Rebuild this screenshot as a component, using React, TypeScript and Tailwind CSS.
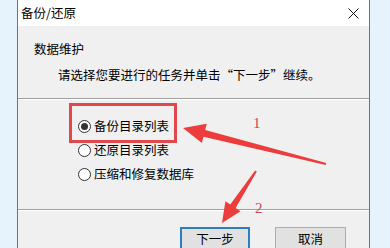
import React from 'react';

type Pt = [number, number];

// builds a tapered arrow polygon from tail to tip
const arrowPoints = (tail: Pt, tip: Pt, headLen: number, headHalf: number, shaftHalf: number, tailHalf: number) => {
  const dx = tip[0] - tail[0];
  const dy = tip[1] - tail[1];
  const len = Math.hypot(dx, dy);
  const ux = dx / len;
  const uy = dy / len;
  const nx = -uy;
  const ny = ux;
  const bx = tip[0] - ux * headLen;
  const by = tip[1] - uy * headLen;
  const pts: Pt[] = [
    tip,
    [bx + nx * headHalf, by + ny * headHalf],
    [bx + nx * shaftHalf, by + ny * shaftHalf],
    [tail[0] + nx * tailHalf, tail[1] + ny * tailHalf],
    [tail[0] - nx * tailHalf, tail[1] - ny * tailHalf],
    [bx - nx * shaftHalf, by - ny * shaftHalf],
    [bx - nx * headHalf, by - ny * headHalf],
  ];
  return pts.map(p => p.join(',')).join(' ');
};

const Radio: React.FC<{ checked?: boolean; label: string }> = ({ checked, label }) => (
  <div className="flex items-center h-[24px]">
    <span className="w-[13px] h-[13px] rounded-full border border-[#333333] bg-white flex items-center justify-center">
      {checked && <span className="w-[7px] h-[7px] rounded-full bg-[#333333]" />}
    </span>
    <span className="ml-[3px]">{label}</span>
  </div>
);

const App: React.FC = () => {
  return (
    <div
      className="relative w-[390px] h-[248px] overflow-hidden bg-[#e6f2fc] text-[12.5px] text-black"
      style={{ fontFamily: '"Noto Sans CJK SC", "Noto Sans", sans-serif' }}
    >
      <div className="ml-[17px] w-[353px] h-full border-x border-[#3d81b0] flex flex-col">
        {/* title bar */}
        <div className="h-[26px] bg-white flex items-center justify-between pl-[3px] pr-[10px] shrink-0">
          <span className="leading-[16px]">备份/还原</span>
          <svg width="11" height="11" viewBox="0 0 11 11" className="block">
            <path d="M0.5 0.5 L10.5 10.5 M10.5 0.5 L0.5 10.5" stroke="#111" strokeWidth="1" />
          </svg>
        </div>

        <div className="flex-1 bg-[#f0f0f0] flex flex-col">
          {/* header */}
          <div className="h-[72px] pt-[15px] pl-[16px] shrink-0">
            <div className="leading-[16px]">数据维护</div>
            <div className="leading-[16px] mt-[10px] pl-[24px]">请选择您要进行的任务并单击“下一步”继续。</div>
          </div>
          <div className="h-px bg-[#a0a0a0]" />
          <div className="h-px bg-white" />

          {/* options */}
          <div className="h-[109px] pt-[14px] pl-[60px] shrink-0">
            <Radio checked label="备份目录列表" />
            <Radio label="还原目录列表" />
            <Radio label="压缩和修复数据库" />
          </div>
          <div className="h-px bg-[#a0a0a0]" />
          <div className="h-px bg-white" />

          {/* buttons */}
          <div className="flex justify-end gap-[25px] pr-[23px] pt-[16px]">
            <button className="w-[70px] h-[23px] bg-[#e1e1e1] border-2 border-[#2f7dbf] leading-[18px]">下一步</button>
            <button className="w-[71px] h-[23px] bg-[#e1e1e1] border border-[#adadad] leading-[20px]">取消</button>
          </div>
        </div>
      </div>

      {/* annotations */}
      <div className="absolute left-[69px] top-[103px] w-[108px] h-[40px] border-[3px] border-[#e0484c]" />
      <svg className="absolute left-0 top-0" width="390" height="248">
        <polygon points={arrowPoints([326, 164], [183, 128], 22, 10, 3.5, 1)} fill="#ec3c3c" />
        <polygon points={arrowPoints([256, 171], [222, 223], 20, 9, 3.2, 1)} fill="#ec3c3c" />
      </svg>
      <span
        className="absolute left-[253px] top-[114px] text-[15px] leading-[18px] text-[#c9474b]"
        style={{ fontFamily: '"Liberation Serif", serif' }}
      >
        1
      </span>
      <span
        className="absolute left-[255px] top-[200px] text-[15px] leading-[16px] text-[#c9474b]"
        style={{ fontFamily: '"Liberation Serif", serif' }}
      >
        2
      </span>
    </div>
  );
};

export default App;
